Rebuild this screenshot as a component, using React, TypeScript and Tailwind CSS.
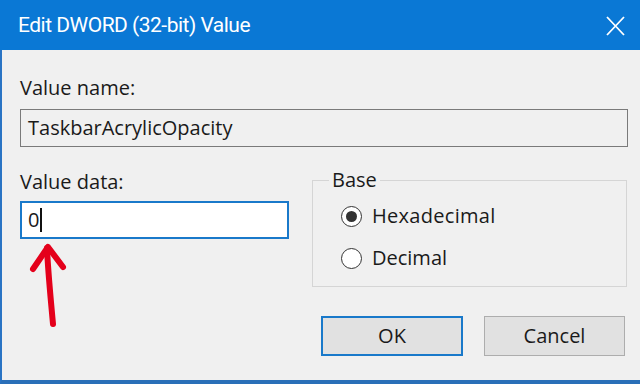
import React from "react";

export default function App() {
  const font = { fontFamily: '"Open Sans", "Noto Sans", "Liberation Sans", sans-serif' };
  return (
    <div className="w-[640px] h-[384px] flex flex-col overflow-hidden bg-[#f0f0f0] text-[#1a1a1a]" style={font}>
      <div className="h-[50px] shrink-0 bg-[#0a78d5] flex items-center justify-between pl-[18px] pr-[15px]">
        <span className="text-white text-[21px] leading-none pt-[1px] tracking-[-0.5px]" style={{ fontFamily: 'Roboto, "Open Sans", sans-serif' }}>
          Edit DWORD (32-bit) Value
        </span>
        <svg width="19" height="20" viewBox="0 0 19 20" className="mt-[2px]">
          <path d="M1 1 L18 19 M18 1 L1 19" stroke="#ffffff" strokeWidth="1.8" fill="none" />
        </svg>
      </div>
      <div className="relative flex-1 flex flex-col border-l-[2px] border-b-[4px] border-l-[#2a74c4] border-b-[#2a6fb8] pl-[18px] pr-[12px] pt-[26px] pb-[24px]">
        <div className="text-[20px] leading-[24px]">Value name:</div>
        <div className="mt-[9px] h-[38px] border border-[#7a7a7a] bg-[#f0f0f0] flex items-center pl-[7px] text-[20px]">
          TaskbarAcrylicOpacity
        </div>
        <div className="flex mt-[10px]">
          <div className="w-[269px] flex flex-col pt-[13px]">
            <div className="text-[20px] leading-[24px]">Value data:</div>
            <div className="mt-[7px] h-[38px] border-[2px] border-[#1979ca] bg-white flex items-center pl-[6px] text-[20px]">
              <span>0</span>
              <span className="ml-[1px] w-[2px] h-[24px] bg-[#111]" />
            </div>
          </div>
          <fieldset className="ml-[23px] mt-[11px] w-[315px] h-[119px] border border-[#d5d5d5] pl-[28px]">
            <legend className="ml-[-12px] px-[3px] text-[20px] leading-[24px]">Base</legend>
            <div className="flex items-center mt-[12px] gap-[10px]">
              <span className="w-[21px] h-[21px] rounded-full border-[1.5px] border-[#333] bg-white flex items-center justify-center">
                <span className="w-[11px] h-[11px] rounded-full bg-[#333]" />
              </span>
              <span className="text-[20px] leading-[24px] tracking-[0.3px]">Hexadecimal</span>
            </div>
            <div className="flex items-center mt-[18px] gap-[10px]">
              <span className="w-[21px] h-[21px] rounded-full border-[1.5px] border-[#333] bg-white" />
              <span className="text-[20px] leading-[24px]">Decimal</span>
            </div>
          </fieldset>
        </div>
        <div className="mt-auto flex justify-end gap-[21px] pr-[3px]">
          <button className="w-[142px] h-[40px] border-[2px] border-[#1979ca] bg-[#e1e1e1] text-[20px] flex items-center justify-center" style={font}>OK</button>
          <button className="w-[141px] h-[40px] border border-[#adadad] bg-[#e1e1e1] text-[20px] flex items-center justify-center" style={font}>Cancel</button>
        </div>
        <svg width="60" height="90" viewBox="0 0 60 90" className="absolute left-[19px] top-[192px]">
          <path d="M26 6 C27 30 30 60 32 82" stroke="#e4001b" strokeWidth="6" strokeLinecap="round" fill="none" />
          <path d="M12 27 L27 5 L42 25" stroke="#e4001b" strokeWidth="6" strokeLinecap="round" strokeLinejoin="round" fill="none" />
        </svg>
      </div>
    </div>
  );
}
